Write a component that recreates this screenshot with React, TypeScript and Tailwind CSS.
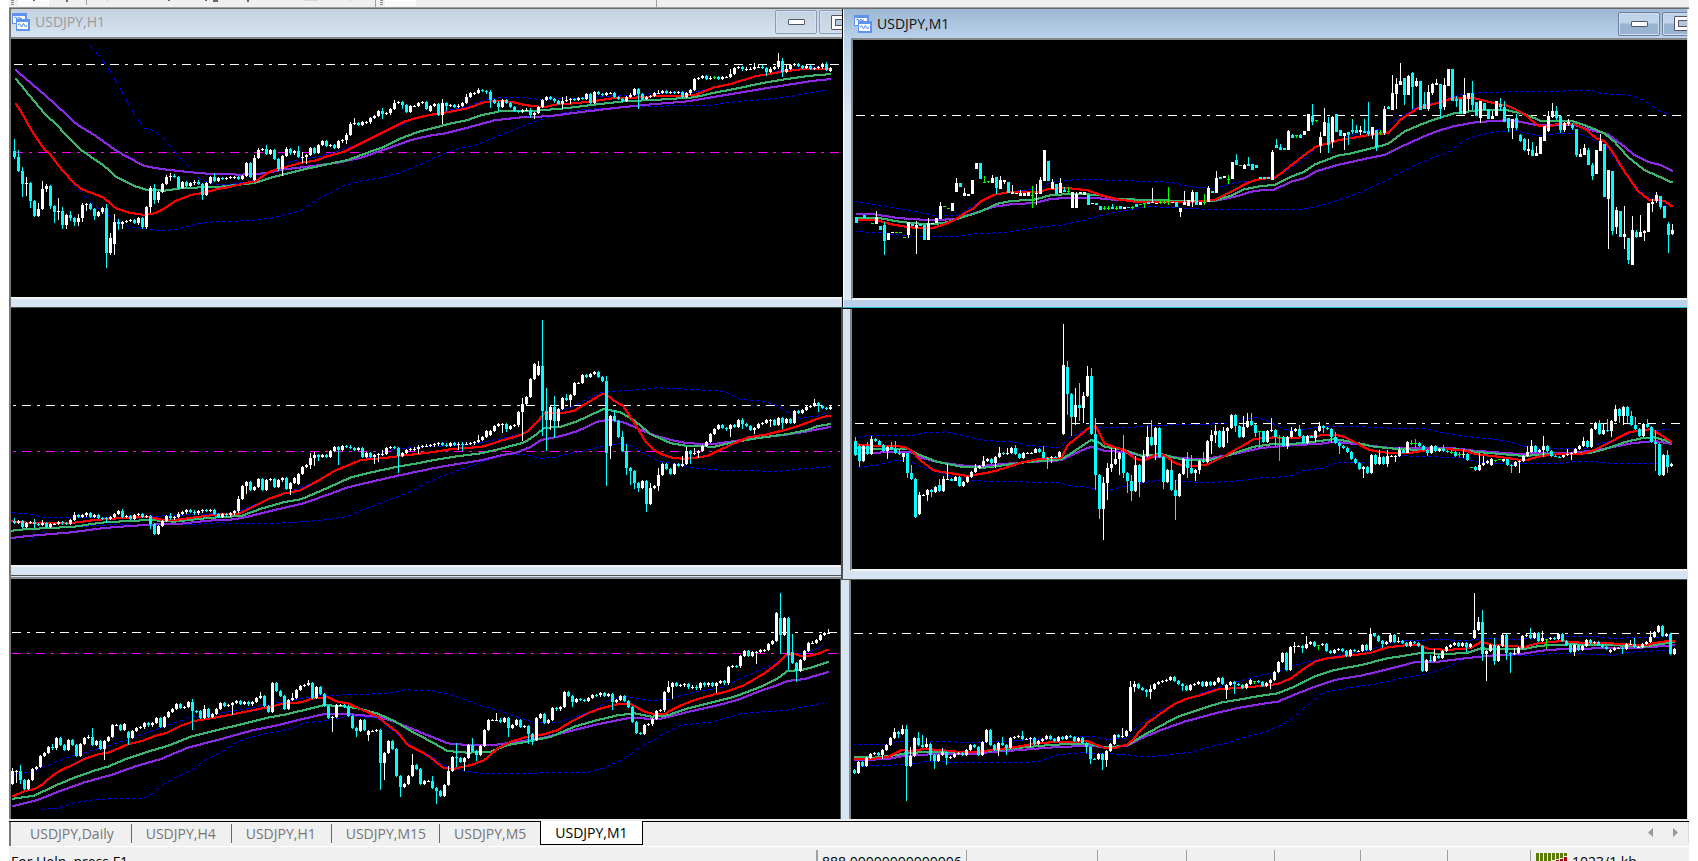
import type { ReactNode } from "react";
import { clsx } from "clsx";

type ChartData = {
  name: string;
  // pixel shift of the plot inside its window
  dx: number;
  dy: number;
  // pixel column of the first bar
  first: number;
  // default wick length in ticks
  wick: number;
  bid: number;
  order?: number;
  lineStart: number;
  lineEnd: number;
  lineOffset?: number;
  fast: string;
  mid: string;
  slow: string;
  upper: string;
  lower: string;
  // "open>close:high:low", open defaults to the previous close, "g" marks an unchanged bar
  bars: string;
};

const TICKS = 3;
const BAR_STEP = 4;

const LEFT_H1: ChartData = {
  name: "H1",
  dx: -11,
  dy: -39,
  first: 14,
  wick: 4,
  bid: 193,
  order: 457,
  lineStart: 14,
  lineEnd: 839,
  fast: "44,312 60,335 90,390 130,448 145,460 175,500 210,540 240,567 275,580 308,593 345,625 380,637 430,645 460,640 490,625 525,602 570,585 610,578 650,567 690,560 730,550 765,543 800,518 835,505 870,497 905,487 940,483 975,470 1030,455 1080,430 1150,395 1210,365 1250,353 1290,344 1350,335 1400,325 1445,308 1475,303 1530,305 1570,315 1630,322 1660,314 1720,310 1770,304 1835,295 1900,293 1970,288 2080,286 2140,262 2190,252 2265,228 2350,214 2400,208 2491,206",
  mid: "44,236 80,280 130,340 160,368 240,450 310,498 345,530 400,558 440,570 490,572 540,565 600,562 660,560 760,549 820,530 900,510 960,497 1040,480 1100,458 1150,440 1200,415 1250,396 1290,386 1350,370 1400,360 1440,346 1500,333 1610,332 1700,324 1780,314 1870,304 1990,298 2080,292 2140,278 2210,265 2280,250 2350,238 2420,228 2491,222",
  slow: "44,210 120,275 160,310 230,375 280,405 350,455 430,498 480,507 560,516 620,521 720,524 790,520 850,508 920,500 1010,488 1080,473 1160,445 1230,420 1290,406 1330,401 1400,383 1480,361 1570,351 1640,349 1750,335 1850,323 1950,313 2060,304 2130,292 2250,272 2350,256 2440,242 2491,237",
  upper: "270,136 310,185 330,215 350,250 370,285 400,340 430,382 460,390 490,415 520,450 560,495 600,538 640,551 680,552 740,545 790,525 850,490 880,480 950,470 1010,452 1080,430 1150,395 1250,353 1340,330 1400,318 1450,300 1490,291 1560,291 1610,296 1700,295 1780,288 1850,286 1950,280 2010,277 2080,275 2150,258 2260,230 2340,210 2460,198",
  lower: "80,365 110,420 150,462 210,540 250,585 290,620 340,655 390,680 440,685 480,692 530,686 570,675 620,665 700,662 760,660 820,651 900,630 960,592 1030,555 1080,542 1140,532 1200,516 1290,478 1340,455 1380,442 1420,436 1480,412 1540,388 1600,364 1650,348 1720,330 1800,324 1900,318 2020,316 2120,316 2200,304 2300,296 2380,286 2480,268",
  bars: `453>470:417:477 513:450 552:501:590 550:531:587 603::624 648 627:609 567:543 558:552:576 618::627 636::668 633:594:660 675:621:687
    645::687 654:633:663 666::678 655:642:678 615:609:666 612::633 627 648::660 637 624 760:612:804 714:699 732>666:642:765 672:657:690
    666::687 663 660 668 655::675 682 622 564:558:639 600:552:612 576::609 552 530:524 527:519:543 531 564 546 558 550 545 552 585::600
    549 531 543:519 534 536 534 532 531 537 528 489 531 540>474:465 450:444 447 462:435 450 477 507::513 468::528 447:441 460 454
    471:438 470:456:489 465::492 444 459 435 423 438 435 443 424 420 405:399:432 372:366 369:354 375 367 367 354 348 333 342:324:357
    340 327 309:300 306 315::327 336 318 318 309 306 327 332>318 312 345 309:297:372 318::333 315 321 317 309 291:282 280 279 270:264
    273 277 300:270:324 308 321::333 300 309 321 333 336 330 329 345::354 339::357 321 300 291 297 304 312 303:291:327 299:288 298::312
    300 294 297 282 309 276 282 285 279 279 291 297 303 291 284 267 282::327 297 291 288 279 279:270 273 279 276 279 276 291 280 270
    237 234 228 237 233 232g:228:238 237 231 231 222:207 204 201 208 206 206 201:189 200 204 216::228 206 202 183:159 216:174:231
    207:195 195 192 198 204 198 207 204 202 192 210:186 213>204`,
};

const RIGHT_M1: ChartData = {
  name: "M1",
  dx: -23,
  dy: -40,
  first: 26,
  wick: 0,
  bid: 346,
  lineStart: 26,
  lineEnd: 851,
  fast: "79,661 140,661 180,673 230,681 260,684 310,683 340,673 370,661 400,640 430,624 450,604 490,584 530,577 620,577 650,567 710,564 770,571 810,585 860,598 920,606 1010,605 1080,606 1150,600 1200,576 1250,548 1290,536 1330,534 1350,520 1420,465 1455,440 1525,420 1620,404 1670,400 1710,358 1760,325 1830,306 1865,294 1930,295 1990,310 2030,317 2080,342 2120,376 2150,381 2180,372 2230,372 2270,392 2295,415 2320,423 2340,450 2380,515 2420,572 2455,600 2500,602 2527,622",
  mid: "79,655 150,655 210,666 290,673 340,669 400,650 450,634 500,611 540,603 610,599 660,585 740,581 810,586 860,598 960,599 1050,603 1150,602 1200,587 1240,568 1290,558 1330,555 1380,530 1420,515 1450,494 1520,467 1560,460 1640,440 1670,432 1720,395 1770,373 1820,355 1870,340 1940,331 2030,331 2080,342 2130,363 2220,362 2260,375 2320,400 2350,425 2390,470 2440,510 2480,528 2527,549",
  slow: "79,642 130,643 200,654 300,661 370,657 430,640 490,620 540,613 610,609 660,597 720,593 790,594 860,600 950,605 1150,603 1220,588 1260,575 1290,571 1330,569 1380,545 1420,535 1455,514 1520,495 1600,477 1660,465 1720,436 1770,413 1820,393 1870,378 1940,366 2040,360 2110,374 2170,374 2230,374 2270,388 2330,402 2370,432 2410,465 2450,485 2490,495 2527,514",
  upper: "79,604 160,616 240,630 320,647 380,645 440,608 500,582 560,572 630,562 660,545 700,540 760,536 860,540 1020,545 1080,558 1150,565 1220,545 1280,540 1350,522 1430,470 1460,440 1560,405 1650,385 1700,355 1760,320 1840,300 1880,284 1930,278 2000,275 2110,272 2290,271 2310,279 2400,284 2440,300 2480,327 2520,345",
  lower: "79,693 150,697 240,708 300,709 380,709 430,700 520,696 600,683 690,674 760,660 800,647 880,630 950,618 1040,622 1150,628 1290,628 1400,627 1450,620 1500,606 1560,587 1610,567 1680,533 1740,500 1800,474 1860,452 1900,420 1940,405 2000,393 2060,391 2120,405 2180,400 2230,398 2260,405 2320,432 2400,540 2450,590 2480,600 2520,625",
  bars: `651>668 651g 645>654 654g 669g 672>651:633 678>690 675>723:666:765 720>699 700>697 697g 697g 710g 705>667::714 672>677 684>674:663:762
    673>678 675>720 720>669:654 672>669 670>655 657>618:606 619g 625g 633>609 576>549:534 549>560 587>579:564 587>582 582>540 507>489 489>537
    546g:528 543g::549 549>534:525 531>564::582 567>540:528 546>541:540:552 546>579 582>576:555 582>578 587>578:570 587>578 587>576 585g:558:624
    583>579:552:615 583>541:531 543>450 483>543 567>546:537 552>582 578>549:534 570>577:561 574g:561:579 624>576 624>582:576 582>576 585>577
    585>615 612>609 609>615 618>629 624g:618:629 624g:618:629 621>626:612 624g:618:629 618>628 627>621 620>625 622g:618:627 612>620 612g 610g::625
    606>612 610>606:564 610>608 606g:597:612 606g:600:612 603g:561:615 610>606 606>620 636>624::651 615>606:573 618>600 606>576:570:621 576>615
    615>606 606g:582:615 606>564:558 573>579 579>534:513 531>537 534>529 537g:525:552 537>486 480>495:462 495g 507>495:492 493>498:471 492>510
    495>504 531>538 531>538 531>538 540>456:450 435>444:417 441>450:432 444>450 450>393:390 405>414:402 405g::414 405>414:402 405>393
    393>342 348>366:312:375 360g::366 438>411:396:459 408>366:324 369>435:351:459 426>351:348:444 342>396 390>408 408>399::450 396>405::435
    390>396:357:402 390>399:375 396>390:378:405 393>399:357 393>402:306:408 405>381::417 390>441::453 397g:390:405 399>327:318:405 321>327:318
    330>279:225 282>252:234:327 255>243:189 234>285::315 285>228:225 219>261:216:327 258>243:234:261 243>330 312>327:276 327>276:255:333
    279>252:249:285 255>249:237 252>327::357 321>255:234:330 258>207 207>303 297>303:288:321 297>342 342>285:234 297>279::333 279>315:243:330
    306>348 354>303::369 309>330 327>357 357>348:333 348>303 312>321:294:333 321>366:303 354>384::396 384>357::417 354>384:342:390 405>423:402:426
    417>450:414:453 453>447:417:465 450>468:426 468>459:438 462>411 423>378 393>348:333:396 351>333:309:354 333>354:318:360 348>390::399
    390>369:366:396 372>366:357:378 375>384:369:390 387>465::471 471>462:447 465>444:432 450>495:444 495>528:489:540 522>450 453>423:402
    432>591 597>510::747 513>693::705 681>630:621:702 633>711 711>702:618:747 714>780::792 795>690:648 696>711:690:714 711>696:645 699>693:690:723
    696>609 612>606:597:636 603>585:576:609 588>621::627 618>654 672>705:666:759 702>690:672:705`,
};

const LEFT_M15: ChartData = {
  name: "H4",
  dx: -11,
  dy: -8,
  first: 14,
  wick: 4,
  bid: 316,
  order: 454,
  lineStart: 13,
  lineEnd: 840,
  lineOffset: 15,
  fast: "33,664 80,668 150,669 220,668 280,660 350,655 400,652 450,652 490,661 520,660 560,655 620,647 660,643 715,641 760,618 800,598 850,580 895,572 950,543 1000,513 1080,480 1150,474 1220,465 1290,457 1350,447 1410,443 1450,439 1500,422 1550,408 1580,395 1600,375 1630,340 1680,340 1720,332 1790,290 1805,282 1815,282 1840,303 1865,317 1900,370 1930,420 1960,450 1980,462 2020,475 2060,476 2120,468 2160,448 2240,412 2300,403 2380,382 2440,360 2470,350 2491,347",
  mid: "33,692 80,687 150,684 220,680 300,668 380,663 450,660 520,665 600,656 660,651 720,648 780,626 850,606 900,598 970,568 1050,532 1120,515 1200,498 1250,490 1290,482 1360,470 1440,460 1500,446 1570,427 1600,408 1630,384 1680,380 1730,363 1810,326 1860,338 1900,362 1950,403 2010,430 2060,438 2140,440 2200,426 2280,413 2360,402 2420,390 2450,378 2491,372",
  slow: "33,714 80,708 150,702 210,697 310,684 400,677 470,673 540,671 620,662 700,658 750,648 820,630 900,612 970,588 1040,562 1120,543 1200,525 1290,506 1350,495 1440,481 1500,466 1550,457 1590,440 1620,420 1680,408 1730,393 1790,365 1830,358 1870,368 1920,390 1960,406 2010,420 2060,430 2140,432 2200,423 2260,415 2350,405 2420,394 2491,380",
  upper: "33,637 80,639 130,651 250,652 440,648 560,643 640,640 700,637 720,630 780,605 850,580 950,543 1000,513 1080,478 1110,470 1160,450 1230,441 1290,438 1400,433 1500,415 1570,397 1600,378 1640,340 1700,325 1760,295 1810,273 1870,271 1920,267 1970,262 2060,266 2150,271 2180,277 2220,296 2290,302 2330,315 2370,340 2400,353 2450,347 2480,337",
  lower: "88,721 120,698 150,682 260,677 320,673 450,674 570,672 650,667 760,670 850,667 960,660 1040,648 1080,630 1150,604 1220,578 1290,541 1330,525 1400,500 1500,463 1580,463 1620,474 1660,470 1700,460 1760,449 1800,438 1860,429 1890,436 1930,457 1970,480 2030,490 2080,502 2140,508 2260,511 2330,513 2400,505 2480,500 2491,495",
  bars: `663>669:654 663 681 669 667 672:657:684 675 669:660 681 672 672 666 670 671 660 645:636 650 646 640 651 646 654 655 656::669 651 642
    633 651:627 648 656 645 642 651 648 672::687 702 678 663 648 655:639 651 641 637 630 635 640 634 630 633 630 642 651 642 646 640
    634 597:588 558 546::582 570 561 537 570 540 538 561 541 534 567 549::585 534 552>522 501 495 474:459:507 465:456:498 470::483
    466 471 453 441 450::495 438 440 444 450 444 471 460 471 466::492 463::486 462:450 444 442 444 468::519 459 450 448 446 440::462
    438 437 436 433 430 434 438 430 434 431::450 432::453 431 430 426 420:405 411 393 405>393 378 372 372::399 387::396 378 376 336
    312:294:423 291 237 192 225>198:183 333:60:408 360:264:453 321::390 363:288:414 327::381 294 300:282 285::321 249 249 225 231 222
    216 231 243 459:228:558 438>348::477 363:330 411 453:393 504:432:525 513::555 549::567 564::576 543 612::636 564:549 558 525:504:573
    492 507 522 492 497 492:468 453:441 462::492 460:444 453::474 438 426 402 387 375 384 388 375::411 381 360 372:354:387 378 390
    384::402 372 369 360 360::381 375 354 369::387 357 369 333 339 330 321 318 309:297 318:306:336 324 327 321`,
};

const RIGHT_M5: ChartData = {
  name: "M5",
  dx: -12,
  dy: -9,
  first: 15,
  wick: 2,
  bid: 370,
  lineStart: 15,
  lineEnd: 840,
  fast: "46,433 90,437 140,438 190,440 210,450 240,483 280,512 330,520 380,528 440,518 490,505 540,488 600,476 660,474 680,435 720,403 750,378 765,380 790,430 820,441 850,450 880,475 900,480 920,478 940,465 970,466 1000,488 1020,495 1070,498 1100,493 1150,468 1200,440 1240,417 1260,415 1300,412 1350,415 1400,410 1460,404 1500,407 1540,425 1580,448 1620,457 1700,460 1760,450 1830,448 1880,453 1900,462 1970,470 2040,480 2060,479 2100,468 2150,462 2220,462 2260,450 2310,425 2360,398 2400,390 2430,388 2460,405 2494,428",
  mid: "46,444 100,446 200,446 230,462 290,486 360,500 430,503 500,494 560,486 660,478 690,460 750,420 770,425 790,440 850,450 900,467 960,462 1000,473 1040,481 1100,481 1160,466 1240,440 1290,433 1350,432 1420,425 1480,417 1540,427 1600,440 1660,446 1740,450 1840,447 1900,455 1980,462 2050,468 2110,463 2240,460 2290,448 2350,427 2400,415 2440,412 2494,428",
  slow: "46,461 130,457 210,457 240,473 290,486 370,497 430,497 510,490 600,484 660,481 690,465 750,440 790,452 850,456 920,470 1000,472 1080,478 1160,466 1260,444 1350,436 1440,431 1480,425 1560,434 1640,443 1830,444 1900,452 2020,461 2100,460 2180,459 2260,452 2330,438 2370,430 2440,423 2494,432",
  upper: "46,411 80,406 210,406 250,397 320,394 380,408 430,420 520,425 560,434 660,442 680,415 740,385 780,382 880,380 950,374 1080,372 1160,368 1210,355 1250,350 1300,370 1330,388 1370,390 1410,383 1470,377 1540,377 1620,382 1760,385 1790,393 1860,406 1950,415 2020,427 2060,440 2110,445 2240,443 2260,433 2320,420 2390,390 2490,388",
  lower: "46,502 120,492 160,480 200,478 220,488 260,505 320,525 380,538 440,543 600,545 660,545 680,555 740,560 800,570 840,560 900,548 960,538 1020,542 1100,547 1200,540 1260,532 1310,530 1360,524 1380,512 1450,502 1490,486 1580,487 1610,475 1680,466 1760,468 1860,472 1910,485 1980,490 2160,490 2190,484 2240,482 2310,488 2340,490 2490,488",
  bars: `423>465:411 438>483:432:501 438 462:426 417:408 423 434 453 441::477 447:426 459:423 462:447 471>460::486 519::534 537:495 651 642>585:576
    585 570::603 576::591 561 555>573:537 537:528 537:492 542 531 558 546 531 516 504:492 498 483:468 477 489 471::504 459:441 462
    459:444 444 462:435 474 459 458 458 447 457 474:438 475::507 470::489 471 456 402>195:72 201>282:183:345 351::408 315:264:375
    324:249:363 288:276:369 228:198 402:204 525:354:570 627::657 549:531:720 504:489:600 492:444:516 477:444 459::525 519:405:534 543::579
    573:525:603 495:468 546::591 468:450 411:378 435:360 384::480 471 546::567 510 570:480 588:540:660 522 477 504:456:534 519:465
    510::543 483::522 487:456 423 405:390:462 393:375:429 441 393:381 384::429 345 378::396 411 381:348 363:339 375:339 399::411
    394g::447 426 393 390:354 411::438 411g:405:483 438 411::447 393:381 387 408:375 429 408 413 393::426 378:366 384::399 387
    411::429 429:396 438::462 444 456 477 489 507 501::534 519 465 492 471:450 492 468:450:501 468 468::486 450:441 458 426
    429g:420:435 429g:417:444 438 450 459::468 438 453 447 453:435 457 456g:450:462 468 463g:456:471 461:450:474 480 502g 501>510
    496:459 490:468 483 495>477 479g::486 478g 483>478 495 498::519 486 483::519 468 456:438 438:420 456 450 438:408:471 453 468 470
    471 466 462:447 459::480 447 438 423:411 441 387 369 402:360 390:372 393:357 363::411 327:315 348::369 321::375 348::369 375:333
    387:351 408 372 381:357 426 432:390:513 525 465 501:450:519 498>492`,
};

const LEFT_DAILY: ChartData = {
  name: "Daily",
  dx: -11,
  dy: -9,
  first: 12,
  wick: 4,
  bid: 187,
  order: 250,
  lineStart: 12,
  lineEnd: 837,
  fast: "37,678 70,664 100,657 125,643 150,620 180,600 215,585 260,563 290,553 325,547 375,525 425,512 465,497 500,488 540,467 580,453 640,443 710,430 790,414 850,400 900,397 940,384 980,382 1010,395 1040,400 1090,422 1130,440 1160,465 1190,487 1220,525 1260,545 1290,563 1310,580 1330,595 1360,596 1410,585 1450,570 1490,535 1530,515 1580,500 1620,495 1670,480 1710,455 1760,430 1800,415 1850,403 1890,402 1930,425 1960,433 1990,432 2030,410 2080,390 2140,373 2180,364 2230,345 2290,310 2330,280 2355,255 2380,252 2410,260 2450,252 2485,237",
  mid: "37,686 100,677 160,648 220,623 280,602 320,590 375,567 440,545 500,528 570,500 650,480 720,463 800,443 850,434 910,420 970,405 1040,410 1080,417 1130,431 1180,453 1230,483 1290,515 1340,543 1400,548 1470,545 1520,525 1590,513 1650,500 1720,470 1790,450 1850,436 1900,430 1950,440 2000,436 2060,415 2140,395 2200,380 2280,350 2330,325 2360,303 2400,300 2440,290 2485,275",
  slow: "37,708 110,690 180,662 250,637 330,615 400,590 480,567 560,533 650,510 750,482 820,468 900,448 970,432 1040,432 1130,440 1180,455 1230,475 1290,500 1340,520 1400,525 1470,526 1550,516 1630,503 1700,485 1790,463 1880,445 1980,446 2050,428 2140,408 2210,390 2280,362 2330,345 2360,333 2410,327 2485,305",
  upper: "37,612 90,605 120,595 170,572 220,555 300,533 390,505 470,475 520,458 570,440 640,430 740,415 800,400 850,395 900,384 970,374 1080,373 1180,366 1210,358 1290,360 1340,370 1400,390 1440,405 1500,420 1540,437 1600,455 1670,456 1720,440 1780,420 1830,385 1880,378 1950,390 2000,387 2080,365 2170,350 2240,315 2310,285 2360,258 2400,248 2440,240 2470,222",
  lower: "125,716 170,713 220,697 290,686 430,683 460,668 490,640 530,618 580,596 610,570 660,547 710,515 750,500 810,486 870,475 910,458 980,450 1050,435 1130,443 1160,465 1200,500 1240,530 1280,550 1330,585 1390,600 1440,609 1560,608 1760,606 1810,592 1870,565 1920,530 1990,490 2040,464 2130,455 2220,430 2300,422 2350,421 2400,411 2470,397",
  bars: `642>603:594 603::639 630:585:642 657 630 597 591 558 549 531 535:522 504 525 540 510 525 558 522 504 500 525:474 513 537 513::570
    501 465 465 480 462 486>504::525 483 474 472 459 466 459 444 471 441 426 417 402 414 411 396 423:387:480 424 444 417:405 441 432
    417 399 407 405 399::435 394 401 396 403 396 384 378:366 408 426 339 363 378 417 390 384:369 360 348 345 339:330 384 351 372 408
    444 441::486 405 405 410 438 474 483::501 450 480 495>483::513 483 480 579::660 549::630 513 537 618 651::681 642 618 585:552 597
    642 633 633 654:618 663::702 678 645 603:588 561 564:519:591 576 564::603 525 543:504 555::573 528 480 450 450 449:429 456 444
    474::501 465 450 471 468 492::522 510::525 444 432 459 450 414 418 411 366 378 396::411 387 390 393 384 375 376 369 378 372 396::420
    390 378 393 411 456 489 492 465 463 447 423 421 366 351:333 339::387 348 346 342 352 350 355 339 346 340 348 339::369 333 340 291
    288 289 258 243 258 246 246::282 241 240 222 213 129 144>195:69:252 144 255::300 246>279:192 303::336 270 243 219 218 210 195 189 189:177`,
};

const RIGHT_M30: ChartData = {
  name: "M15",
  dx: -11,
  dy: -10,
  first: 14,
  wick: 3,
  bid: 190,
  lineStart: 14,
  lineEnd: 839,
  fast: "43,566 90,567 140,561 180,541 210,542 250,537 300,540 360,546 400,547 450,540 520,532 580,521 640,516 740,514 790,533 820,534 860,523 875,510 890,490 920,458 960,430 1000,402 1040,385 1080,375 1130,358 1200,353 1260,348 1310,342 1350,325 1390,295 1425,273 1460,265 1550,254 1590,248 1640,232 1700,225 1740,226 1760,236 1820,240 1890,234 1920,215 1950,224 2050,231 2090,220 2160,213 2220,218 2310,220 2410,226 2460,215 2503,213",
  mid: "43,561 100,563 160,556 200,549 280,545 400,546 480,539 560,531 640,524 740,521 800,533 860,525 900,500 940,478 1010,440 1070,420 1140,398 1210,386 1260,377 1310,370 1360,350 1420,320 1480,300 1560,285 1640,265 1740,249 1820,252 1880,248 1920,235 1980,238 2050,237 2100,227 2190,223 2310,225 2410,230 2460,222 2503,216",
  slow: "43,571 140,567 180,559 280,552 400,552 450,546 540,540 620,533 740,527 800,532 860,527 900,505 960,480 1030,455 1130,428 1200,412 1260,402 1310,395 1370,370 1430,347 1490,328 1560,317 1640,298 1720,277 1790,275 1880,264 1960,256 2040,252 2100,242 2180,236 2320,235 2420,232 2503,225",
  upper: "43,523 130,522 180,512 310,512 380,517 480,513 560,508 650,504 690,499 760,499 800,506 860,503 890,468 950,425 1040,385 1100,362 1150,345 1210,328 1265,313 1300,307 1340,290 1410,272 1490,255 1580,240 1640,220 1700,209 1820,208 1880,210 1920,205 2030,206 2150,200 2260,198 2310,203 2400,202 2500,198",
  lower: "43,588 140,584 220,580 260,573 400,577 530,577 590,573 650,553 720,547 860,552 900,559 970,555 1050,545 1110,528 1160,518 1210,500 1265,487 1320,465 1360,440 1400,405 1450,365 1520,352 1600,342 1660,328 1760,310 1820,290 1870,265 1920,255 2060,255 2130,250 2220,250 2320,254 2370,245 2460,240 2503,242",
  bars: `600>609:597 576 588 564 552 549 555 540::567 525 504 486:474 492::504 477:465 588:465:693 558:531 504 525:486 531:495 522:504 555::573
    573::597 555 546:534 564::585 561 552 549 554 540 525 530 555 516 480 525 540 518::558 525:501 534::555 504 500 499 507:483 507
    504::531 522 513 507 498 506 513 501 506 498 502 514 504 519 531::549 567::582 568 552 570::600 543::591 522 495 500 498:474 483
    351:333 342:333:366 354 360 366::381 357:345:387 342 336 333 331 321 333 341 348::363 360 345 342 336 348 336 345 336 324 342
    360>345::387 336 342::372 345 354 342 330 332g::341 336 348 339 330::357 306 276 249 300 231 228:216:249 228 234::249 222:198 216 228
    226g::240 222 243 249 240 237 243 258 240 243 242 225 240 192:174 198 213 222::234 216 195 216 213:201 219 228 216 219 228 303 270
    273:255 258:237 264 243 231 225 219 228 219 231::246 222 204>180:69 156:141 252:120:273 243::333 225 273:204:285 228 195 249::270
    252::309 248:234 234 198 195 204:174 189 213 204:183 206g::237 204 207 192 213 225 246 225::258 240 228 210 219 217 225 231 237
    246>240 234 233 238::252 222 222:210 231:204 230 222 216 201:183 186 168 198 192 252 237`,
};

const px = (ticks: number) => Math.round(ticks / TICKS);

// Draws a line column by column with a square pen, so it keeps its weight on slopes
function linePath(line: string, pen: number, dashed = false) {
  const points = line.split(" ").map((point) => point.split(",").map((n) => Number(n) / TICKS));
  const half = Math.floor(pen / 2);
  const start = Math.round(points[0][0]);
  const end = Math.round(points[points.length - 1][0]);
  let d = "";
  let seg = 0;
  let prev = Math.round(points[0][1]);

  for (let x = start; x < end; x++) {
    while (seg < points.length - 2 && points[seg + 1][0] < x) seg++;
    const [x1, y1] = points[seg];
    const [x2, y2] = points[seg + 1];
    const y = Math.round(y1 + ((y2 - y1) * (x - x1)) / (x2 - x1));
    const top = y > prev + 1 ? prev + 1 : y;
    const height = Math.max(Math.abs(y - prev) - 1, 0) + pen;
    if (!dashed || x % 6 < 3) d += `M${x} ${top - half}h${pen}v${height}h-${pen}z`;
    prev = y;
  }

  return d;
}

function candlePaths({ bars, first, wick }: ChartData) {
  const paths = { up: "", down: "", flat: "" };
  let prev = 0;

  bars
    .trim()
    .split(/\s+/)
    .forEach((bar, i) => {
      const [body, high, low] = bar.split(":");
      const flat = body.endsWith("g");
      const parts = body.replace("g", "").split(">").map(Number);
      const close = parts[parts.length - 1];
      const open = parts.length > 1 ? parts[0] : flat ? close : prev;

      const top = Math.min(open, close);
      const bottom = Math.max(open, close);
      const pad = flat ? 0 : wick;
      const y1 = px(top);
      const y2 = Math.max(px(bottom), y1 + 1);
      const hi = Math.min(high ? px(Number(high)) : px(top - pad), y1);
      const lo = Math.max(low ? px(Number(low)) : px(bottom + pad), y2);
      const x = first + i * BAR_STEP;

      const key = flat ? "flat" : close > open ? "down" : "up";
      paths[key] += `M${x - 1} ${y1}h3V${y2}h-3zM${x} ${hi}h1V${lo}h-1z`;
      prev = close;
    });

  return paths;
}

function PriceLine({ chart, y, color }: { chart: ChartData; y: number; color: string }) {
  return (
    <line
      x1={chart.lineStart}
      x2={chart.lineEnd}
      y1={Math.floor(y / TICKS) + 0.5}
      y2={Math.floor(y / TICKS) + 0.5}
      stroke={color}
      strokeDasharray="9 6 3 6"
      strokeDashoffset={chart.lineOffset ?? 0}
    />
  );
}

function Chart({ chart, className }: { chart: ChartData; className: string }) {
  const candles = candlePaths(chart);

  return (
    <svg
      role="img"
      aria-label={`USDJPY,${chart.name}`}
      shapeRendering="crispEdges"
      className={clsx("block w-full bg-black", className)}
    >
      <g transform={`translate(${chart.dx} ${chart.dy})`}>
        <PriceLine chart={chart} y={chart.bid} color="#fff" />
        {chart.order && <PriceLine chart={chart} y={chart.order} color="#f0f" />}
        <path d={linePath(chart.upper, 1, true)} fill="#00f" />
        <path d={linePath(chart.lower, 1, true)} fill="#00f" />
        <path d={linePath(chart.slow, 2)} fill="#8a2be2" />
        <path d={linePath(chart.mid, 2)} fill="#3cb371" />
        <path d={linePath(chart.fast, 2)} fill="#f00" />
        <path d={candles.down} fill="#0ff" />
        <path d={candles.up} fill="#fff" />
        <path d={candles.flat} fill="#0f0" />
      </g>
    </svg>
  );
}

function ChartIcon() {
  return (
    <svg width="18" height="18" viewBox="0 0 18 18" className="shrink-0" aria-hidden="true">
      <rect x="0" y="0" width="15" height="11" fill="#5f93ee" />
      <rect x="1" y="3" width="12" height="7" fill="#fff" />
      <path d="M2 5l2-1 1 3 2-3 1 2 2-1" stroke="#4f86ea" fill="none" />
      <rect x="4" y="6" width="14" height="12" fill="#5f93ee" />
      <rect x="5" y="9" width="11" height="7" fill="#fff" />
      <path d="M6 12l1.500-1.500 2 3.500 2-3.500 2 3.500 1.500-2" stroke="#4f86ea" fill="none" />
    </svg>
  );
}

function CaptionButton({ label, active, children }: { label: string; active?: boolean; children: ReactNode }) {
  return (
    <button
      type="button"
      aria-label={label}
      className={clsx(
        "flex h-6 w-[42px] shrink-0 items-center justify-center rounded-xs border",
        active
          ? "border-[#6a7f9c] bg-linear-to-b from-[#c0d4e9] from-45% to-[#99b4d1] to-50% shadow-[inset_0_0_0_1px_#cfdfef]"
          : "border-[#8b9ab5] bg-linear-to-b from-[#c5d2e1] to-[#d0deec] shadow-[inset_0_0_0_1px_#d5e1ee]"
      )}
    >
      {children}
    </button>
  );
}

function TitleBar({ title, active }: { title: string; active?: boolean }) {
  return (
    <header
      className={clsx(
        "flex overflow-hidden",
        active
          ? "h-[29px] items-center bg-linear-to-b from-[#9db8d4] to-[#b9d1ea] pl-2.5"
          : "h-7 items-start bg-linear-to-b from-[#c3d0de] to-[#d7e4f2] pt-px pl-px"
      )}
    >
      <div className="flex h-6 items-center">
        <ChartIcon />
        <h2 className={clsx("ml-[5px] text-sm", active ? "text-[#111]" : "text-[#9a9a9a]")}>{title}</h2>
      </div>
      <div className={clsx("ml-auto flex gap-0.5", active ? "-mr-[17px]" : "-mr-[19px]")}>
        <CaptionButton label="Minimize" active={active}>
          <span className="h-1.5 w-[17px] rounded-[1px] border border-[#53566b] bg-white" />
        </CaptionButton>
        <CaptionButton label="Maximize" active={active}>
          <span className="flex h-[15px] w-[19px] items-center justify-center rounded-[1px] border border-[#53566b] bg-white">
            <span className="h-[7px] w-[11px] border border-[#53566b] bg-[#b4c6da]" />
          </span>
        </CaptionButton>
      </div>
    </header>
  );
}

const TABS = ["Daily", "H4", "H1", "M15", "M5", "M1"];

function Toolbar() {
  return (
    <div className="h-[9px] overflow-hidden border-b border-[#696969] bg-[#f0f0f0]">
      <div className="h-2 border-b border-[#a0a0a0]">
        <svg className="block h-[7px] w-full" shapeRendering="crispEdges" aria-hidden="true">
          <path d="M2 0h3M2 2h3M2 4h3M371 0h3M371 2h3M371 4h3" stroke="#8c8c8c" />
          <path d="M9 0h30v5H9zM376 0h30v5h-30z" fill="#f9f9f9" stroke="#fff" />
          <path d="M77 0h1v5h-1zM366 0h1v7h-1zM647 0h1v7h-1z" fill="#a0a0a0" />
          <path d="M24 0h2v1h-2zM57 0h2v2h-2zM159 0h2v1h-2zM196 0h2v1h-2zM204 0h5v2h-5zM238 0h2v2h-2z" fill="#666" />
          <path d="M97 0h2v1h-2zM295 0h14v1h-14zM340 0h2v1h-2z" fill="#d8d8d8" />
        </svg>
      </div>
    </div>
  );
}

function StatusBar() {
  return (
    <footer className="flex h-6 items-start bg-[#f0f0f0] pt-[3px] text-sm text-black">
      <p className="w-[807px] shrink pl-0.5 pt-0.5">For Help, press F1</p>
      <p className="w-[150px] border-l-2 border-[#a0a0a0] pl-1 pt-0.5">888.00000000000006</p>
      <p className="h-5 w-[131px] border-l border-[#a0a0a0]" />
      <p className="h-5 w-[89px] border-l border-[#a0a0a0]" />
      <p className="h-5 w-[88px] border-l border-[#a0a0a0]" />
      <p className="h-5 w-[86px] border-l border-[#a0a0a0]" />
      <p className="h-5 w-[87px] border-l border-[#a0a0a0]" />
      <p className="h-5 w-[83px] border-l border-[#a0a0a0]" />
      <div className="flex border-l border-[#a0a0a0] pl-[5px]">
        <svg width="32" height="16" className="mt-[3px]" shapeRendering="crispEdges" aria-hidden="true">
          {[16, 16, 16, 16, 7, 6, 5, 3].map((h, i) => (
            <g key={i}>
              <rect x={i * 4} y="0" width="3" height="16" fill="#9c1010" />
              <rect x={i * 4} y="0" width="3" height={h} fill="#5d7a06" />
              {h < 16 && <rect x={i * 4} y={h} width="3" height="1" fill="#f0f0f0" />}
            </g>
          ))}
        </svg>
        <p className="pl-1 pt-0.5">1023/1 kb</p>
      </div>
    </footer>
  );
}

export default function App() {
  return (
    <main className="h-screen overflow-hidden bg-white px-[9px] font-['Open_Sans',sans-serif]">
      <Toolbar />

      {/* Chart windows */}
      <div className="mr-px border-r border-l-2 border-r-[#e3e3e3] border-l-[#787878]">
        <div className="grid grid-cols-[831fr_845fr]">
          <section className="min-w-0 border-b border-[#505050] bg-[#d7e4f2]">
            <TitleBar title="USDJPY,H1" />
            <div className="border-y-2 border-t-[#868686] border-b-[#f4f4f4]">
              <Chart chart={LEFT_H1} className="h-[258px]" />
            </div>
            <div className="h-2" />
          </section>
          <section className="min-w-0 border-b border-l border-b-[#20b8cc] border-l-black bg-[#b9d1ea]">
            <div className="border-l border-white">
              <TitleBar title="USDJPY,M1" active />
              <div className="flex">
                <div className="w-[7px] bg-linear-to-b from-[#b9d1ea] to-[#dce8f4] to-30% from-0%" />
                <div className="min-w-0 flex-1 border-y-2 border-l-2 border-t-[#868686] border-b-[#f4f4f4] border-l-[#868686]">
                  <Chart chart={RIGHT_M1} className="h-[258px]" />
                </div>
              </div>
              <div className="h-[7px]" />
            </div>
          </section>
        </div>

        <div className="grid grid-cols-[830fr_846fr]">
          <section className="min-w-0 bg-[#d7e4f2]">
            <Chart chart={LEFT_M15} className="h-[257px]" />
            <div className="h-2.5 border-t-2 border-[#f4f4f4]" />
            <div className="h-1 border-t border-b-2 border-t-[#505050] border-b-[#868686]" />
          </section>
          <section className="min-w-0 border-t border-l-2 border-t-black border-l-[#505050] bg-[#d7e4f2] pl-[7px]">
            <div className="border-b-2 border-l-2 border-b-[#f4f4f4] border-l-[#868686]">
              <Chart chart={RIGHT_M5} className="h-[260px]" />
            </div>
            <div className="h-2" />
          </section>
        </div>

        <div className="grid grid-cols-[829fr_847fr]">
          <Chart chart={LEFT_DAILY} className="h-60" />
          <section className="min-w-0 border-t border-l border-[#505050] bg-[#d7e4f2] pl-2">
            <div className="border-l-2 border-[#868686]">
              <Chart chart={RIGHT_M30} className="h-[239px]" />
            </div>
          </section>
        </div>
      </div>

      {/* Chart tabs */}
      <div className="border-t-2 border-[#efefef]">
        <nav className="flex h-[26px] items-start border-y border-t-black border-b-white bg-[#f0f0f0] text-sm">
          <div className="h-6 w-[7px] border-l-2 border-[#787878]" />
          {TABS.map((tab, i) => {
            const active = tab === "M1";
            return (
              <a
                key={tab}
                href={`#${tab}`}
                className={clsx(
                  "h-6 min-w-25 pl-3.5 leading-6",
                  i === 0 ? "pr-[18px]" : "pr-3.5",
                  active
                    ? "-mt-px border border-t-0 border-black bg-white text-black"
                    : "text-[#757575]",
                  !active && i < 4 && "bg-[linear-gradient(#696969,#696969)] bg-[length:1px_19px] bg-[position:right_2px] bg-no-repeat"
                )}
              >
                USDJPY,{tab}
              </a>
            );
          })}
          <div className="ml-auto flex h-5 items-center gap-5 border-r border-[#d8d8d8] pr-2.5">
            <button type="button" aria-label="Scroll tabs left">
              <svg width="5" height="9" aria-hidden="true">
                <path d="M5 0v9L0 4.500z" fill="#999" />
              </svg>
            </button>
            <button type="button" aria-label="Scroll tabs right">
              <svg width="5" height="9" aria-hidden="true">
                <path d="M0 0v9l5-4.500z" fill="#999" />
              </svg>
            </button>
          </div>
        </nav>
      </div>

      <StatusBar />
    </main>
  );
}
